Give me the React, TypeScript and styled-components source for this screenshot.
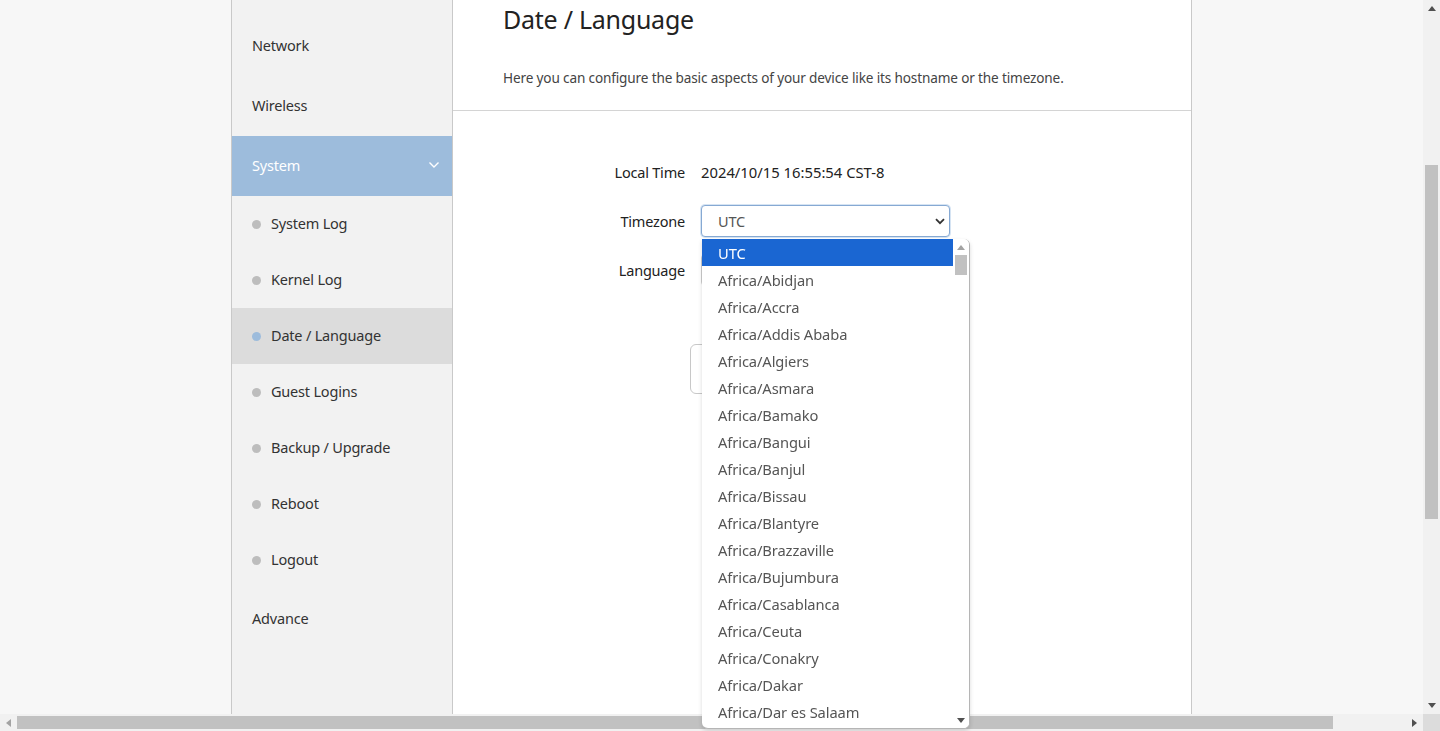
import React from "react";
import styled, { createGlobalStyle } from "styled-components";

const GlobalStyle = createGlobalStyle`
  html, body {
    margin: 0;
    padding: 0;
    height: 731px;
    overflow: hidden;
    background: #f7f7f7;
    font-family: "Noto Sans", "Open Sans", Arial, sans-serif;
    color: #333;
  }
  * { box-sizing: border-box; }
`;

const menuTop = ["Network", "Wireless"];
const subMenu = [
  "System Log",
  "Kernel Log",
  "Date / Language",
  "Guest Logins",
  "Backup / Upgrade",
  "Reboot",
  "Logout",
];
const zones = [
  "UTC",
  "Africa/Abidjan",
  "Africa/Accra",
  "Africa/Addis Ababa",
  "Africa/Algiers",
  "Africa/Asmara",
  "Africa/Bamako",
  "Africa/Bangui",
  "Africa/Banjul",
  "Africa/Bissau",
  "Africa/Blantyre",
  "Africa/Brazzaville",
  "Africa/Bujumbura",
  "Africa/Casablanca",
  "Africa/Ceuta",
  "Africa/Conakry",
  "Africa/Dakar",
  "Africa/Dar es Salaam",
];

const UpTri = ({ color }: { color: string }) => (
  <svg width="8" height="5" viewBox="0 0 8 5">
    <path d="M0 5 L4 0 L8 5 Z" fill={color} />
  </svg>
);

const DownTri = ({ color }: { color: string }) => (
  <svg width="8" height="5" viewBox="0 0 8 5">
    <path d="M0 0 L4 5 L8 0 Z" fill={color} />
  </svg>
);

function App() {
  return (
    <>
      <GlobalStyle />
      <Page>
        <Sidebar>
          {menuTop.map((m) => (
            <MenuItem key={m}>{m}</MenuItem>
          ))}
          <MenuItem $open>
            System
            <svg width="12" height="8" viewBox="0 0 12 8">
              <path d="M1.5 1.5 L6 6 L10.5 1.5" fill="none" stroke="#fff" strokeWidth="1.4" />
            </svg>
          </MenuItem>
          {subMenu.map((m) => (
            <SubItem key={m} $active={m === "Date / Language"}>
              <Dot $active={m === "Date / Language"} />
              {m}
            </SubItem>
          ))}
          <MenuItem>Advance</MenuItem>
        </Sidebar>

        <Main>
          <Header>
            <Title>Date / Language</Title>
            <Desc>
              Here you can configure the basic aspects of your device like its hostname or the timezone.
            </Desc>
          </Header>
          <Form>
            <Label>Local Time</Label>
            <Value>2024/10/15 16:55:54 CST-8</Value>
            <Label>Timezone</Label>
            <SelectWrap>
              <Select $focus>
                UTC
                <svg width="10" height="7" viewBox="0 0 10 7">
                  <path d="M1 1.2 L5 5.2 L9 1.2" fill="none" stroke="#333" strokeWidth="1.8" />
                </svg>
              </Select>
              <Dropdown>
                <Options>
                  {zones.map((z, i) => (
                    <Option key={z} $selected={i === 0}>
                      {z}
                    </Option>
                  ))}
                </Options>
                <ListScroll>
                  <Arrow>
                    <UpTri color="#a3a3a3" />
                  </Arrow>
                  <ListThumb />
                  <Spacer />
                  <Arrow>
                    <DownTri color="#505050" />
                  </Arrow>
                </ListScroll>
              </Dropdown>
            </SelectWrap>
            <Label>Language</Label>
            <Select />
          </Form>
          <Actions>
            <Button aria-label="Save" />
          </Actions>
        </Main>
      </Page>

      <VScroll>
        <VArrow>
          <UpTri color="#505050" />
        </VArrow>
        <VTrack>
          <VThumb />
        </VTrack>
        <VArrow>
          <DownTri color="#505050" />
        </VArrow>
      </VScroll>
      <HScroll>
        <HArrow>
          <svg width="5" height="8" viewBox="0 0 5 8">
            <path d="M5 0 L0 4 L5 8 Z" fill="#a3a3a3" />
          </svg>
        </HArrow>
        <HThumb />
        <HArrow>
          <svg width="5" height="8" viewBox="0 0 5 8">
            <path d="M0 0 L5 4 L0 8 Z" fill="#505050" />
          </svg>
        </HArrow>
      </HScroll>
      <Corner />
    </>
  );
}
export default App;

const Page = styled.div`
  display: flex;
  margin-left: 231px;
  width: 961px;
  height: 714px;
`;

const Sidebar = styled.nav`
  width: 222px;
  flex-shrink: 0;
  background: #f2f2f2;
  border-left: 1px solid #c9c9c9;
  border-right: 1px solid #c9c9c9;
  padding-top: 15px;
`;

const MenuItem = styled.div<{ $open?: boolean }>`
  height: 60px;
  display: flex;
  align-items: center;
  justify-content: space-between;
  padding: 0 12px 0 20px;
  font-size: 14.5px;
  letter-spacing: -0.2px;
  color: ${({ $open }) => ($open ? "#fff" : "#333")};
  background: ${({ $open }) => ($open ? "#9dbcdc" : "transparent")};
  margin-top: ${({ $open }) => ($open ? "1px" : "0")};
  padding-bottom: ${({ $open }) => ($open ? "2px" : "0")};
`;

const SubItem = styled.div<{ $active?: boolean }>`
  height: 56px;
  display: flex;
  align-items: center;
  gap: 10px;
  padding: 0 0 2px 20px;
  font-size: 14.5px;
  letter-spacing: -0.2px;
  color: #333;
  background: ${({ $active }) => ($active ? "#dcdcdc" : "transparent")};
`;

const Dot = styled.span<{ $active?: boolean }>`
  width: 9px;
  height: 9px;
  margin-top: 2px;
  border-radius: 50%;
  background: ${({ $active }) => ($active ? "#9dbcdc" : "#bdbdbd")};
`;

const Main = styled.main`
  flex: 1;
  background: #fff;
  border-right: 1px solid #c9c9c9;
`;

const Header = styled.div`
  padding: 0 50px;
  height: 111px;
  border-bottom: 1px solid #d4d4d4;
`;

const Title = styled.h2`
  margin: 0;
  padding-top: 1px;
  font-size: 25px;
  letter-spacing: -0.25px;
  font-weight: 400;
  line-height: 36px;
  color: #222;
`;

const Desc = styled.p`
  margin: 23px 0 0;
  font-size: 13.6px;
  letter-spacing: -0.15px;
  line-height: 36px;
  color: #444;
`;

const Form = styled.div`
  display: grid;
  grid-template-columns: 100px 249px;
  column-gap: 16px;
  row-gap: 17px;
  align-items: center;
  padding: 45px 0 0 132px;
`;

const Label = styled.div`
  font-size: 14.5px;
  letter-spacing: -0.2px;
  text-align: right;
  color: #222;
  line-height: 32px;
`;

const Value = styled.div`
  font-size: 14.8px;
  color: #222;
  line-height: 32px;
`;

const SelectWrap = styled.div`
  position: relative;
`;

const Select = styled.div<{ $focus?: boolean }>`
  height: 32px;
  width: 249px;
  display: flex;
  align-items: center;
  justify-content: space-between;
  padding: 0 4px 0 16px;
  font-size: 14.5px;
  letter-spacing: -0.2px;
  color: #555;
  border: 1px solid ${({ $focus }) => ($focus ? "#86a9d3" : "#ccc")};
  border-radius: 4px;
  box-shadow: ${({ $focus }) => ($focus ? "0 0 0 1px #d6e4f3" : "none")};
  background: #fff;
`;

const Dropdown = styled.div`
  position: absolute;
  left: 1px;
  top: 34px;
  width: 268px;
  height: 490px;
  display: flex;
  background: #fff;
  border: 1px solid #b5b5b5;
  border-top: none;
  border-left: none;
  border-radius: 0 6px 6px 6px;
  box-shadow: 0 2px 4px rgba(0, 0, 0, 0.15);
  z-index: 5;
  overflow: hidden;
`;

const Options = styled.div`
  flex: 1;
`;

const Option = styled.div<{ $selected?: boolean }>`
  height: 27px;
  line-height: 27px;
  padding: 1px 0 0 16px;
  font-size: 14.7px;
  letter-spacing: -0.1px;
  color: ${({ $selected }) => ($selected ? "#fff" : "#555")};
  background: ${({ $selected }) => ($selected ? "#1a66d2" : "transparent")};
  white-space: nowrap;
`;

const ListScroll = styled.div`
  width: 16px;
  display: flex;
  flex-direction: column;
  align-items: center;
  background: #fff;
`;

const Arrow = styled.div`
  height: 16px;
  display: flex;
  align-items: center;
  justify-content: center;
`;

const ListThumb = styled.div`
  width: 12px;
  height: 20px;
  background: #c1c1c1;
`;

const Spacer = styled.div`
  flex: 1;
`;

const Actions = styled.div`
  padding: 58px 0 0 237px;
`;

const Button = styled.button`
  width: 260px;
  height: 50px;
  background: #fff;
  border: 1px solid #c8c8c8;
  border-radius: 6px;
`;

const VScroll = styled.div`
  position: fixed;
  right: 0;
  top: 0;
  width: 17px;
  height: 714px;
  background: #f1f1f1;
  display: flex;
  flex-direction: column;
`;

const VArrow = styled.div`
  height: 17px;
  display: flex;
  align-items: center;
  justify-content: center;
`;

const VTrack = styled.div`
  flex: 1;
  padding-top: 148px;
  display: flex;
  justify-content: center;
`;

const VThumb = styled.div`
  width: 13px;
  height: 354px;
  background: #c1c1c1;
`;

const HScroll = styled.div`
  position: fixed;
  left: 0;
  bottom: 0;
  width: 1423px;
  height: 17px;
  background: #f1f1f1;
  display: flex;
  align-items: center;
`;

const HArrow = styled.div`
  width: 17px;
  height: 17px;
  display: flex;
  align-items: center;
  justify-content: center;
`;

const HThumb = styled.div`
  width: 1316px;
  height: 13px;
  background: #c1c1c1;
  margin-right: auto;
`;

const Corner = styled.div`
  position: fixed;
  right: 0;
  bottom: 0;
  width: 17px;
  height: 17px;
  background: #dcdcdc;
`;
